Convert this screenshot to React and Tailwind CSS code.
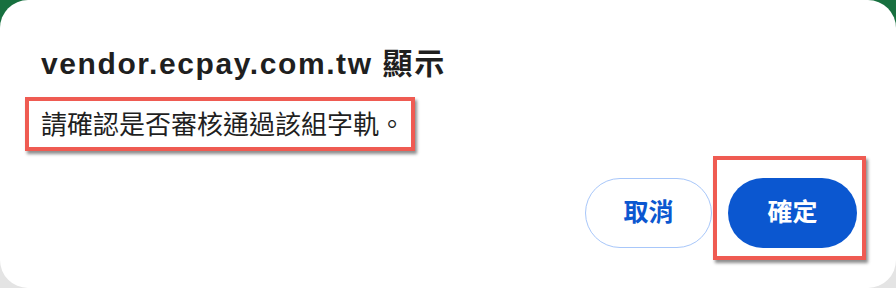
export default function App() {
  return (
    <div className="w-[896px] h-[288px] bg-[linear-gradient(to_bottom,#17703f_0px,#17703f_60px,#e4e4e4_60px)] font-['Liberation_Sans','Noto_Sans_CJK_TC',sans-serif]">
      <div className="w-full h-full bg-white rounded-[28px] pl-[41px] pr-[39px] pt-[45px] pb-[40px] flex flex-col">
        {/* TITLE */}
        <h1 className="text-[30px] leading-[38px] font-semibold tracking-[1.6px] text-[#1f1f1f]">
          vendor.ecpay.com.tw 顯示
        </h1>

        {/* MESSAGE */}
        <div className="mt-[22px] relative self-start">
          <p className="text-[26px] leading-[36px] text-[#1f1f1f] font-['Noto_Sans_CJK_TC',sans-serif]">
            請確認是否審核通過該組字軌。
          </p>
          <span className="absolute -left-[16px] -right-[10px] -top-[8px] -bottom-[10px] border-4 border-[#ef5b52] shadow-[2px_3px_3px_rgba(0,0,0,0.45)]" />
        </div>

        {/* BUTTONS */}
        <div className="mt-auto flex justify-end gap-[16px]">
          <button className="w-[127px] h-[70px] rounded-full border-[1.5px] border-[#a8c7fa] text-[#0b57d0] text-[25px] font-bold">
            取消
          </button>
          <div className="relative">
            <button className="w-[129px] h-[70px] rounded-full bg-[#0b57d0] text-white text-[25px] font-bold">
              確定
            </button>
            <span className="absolute -left-[15px] -right-[9px] -top-[22px] -bottom-[12px] border-4 border-[#ef5b52] shadow-[2px_3px_3px_rgba(0,0,0,0.45)]" />
          </div>
        </div>
      </div>
    </div>
  );
}
